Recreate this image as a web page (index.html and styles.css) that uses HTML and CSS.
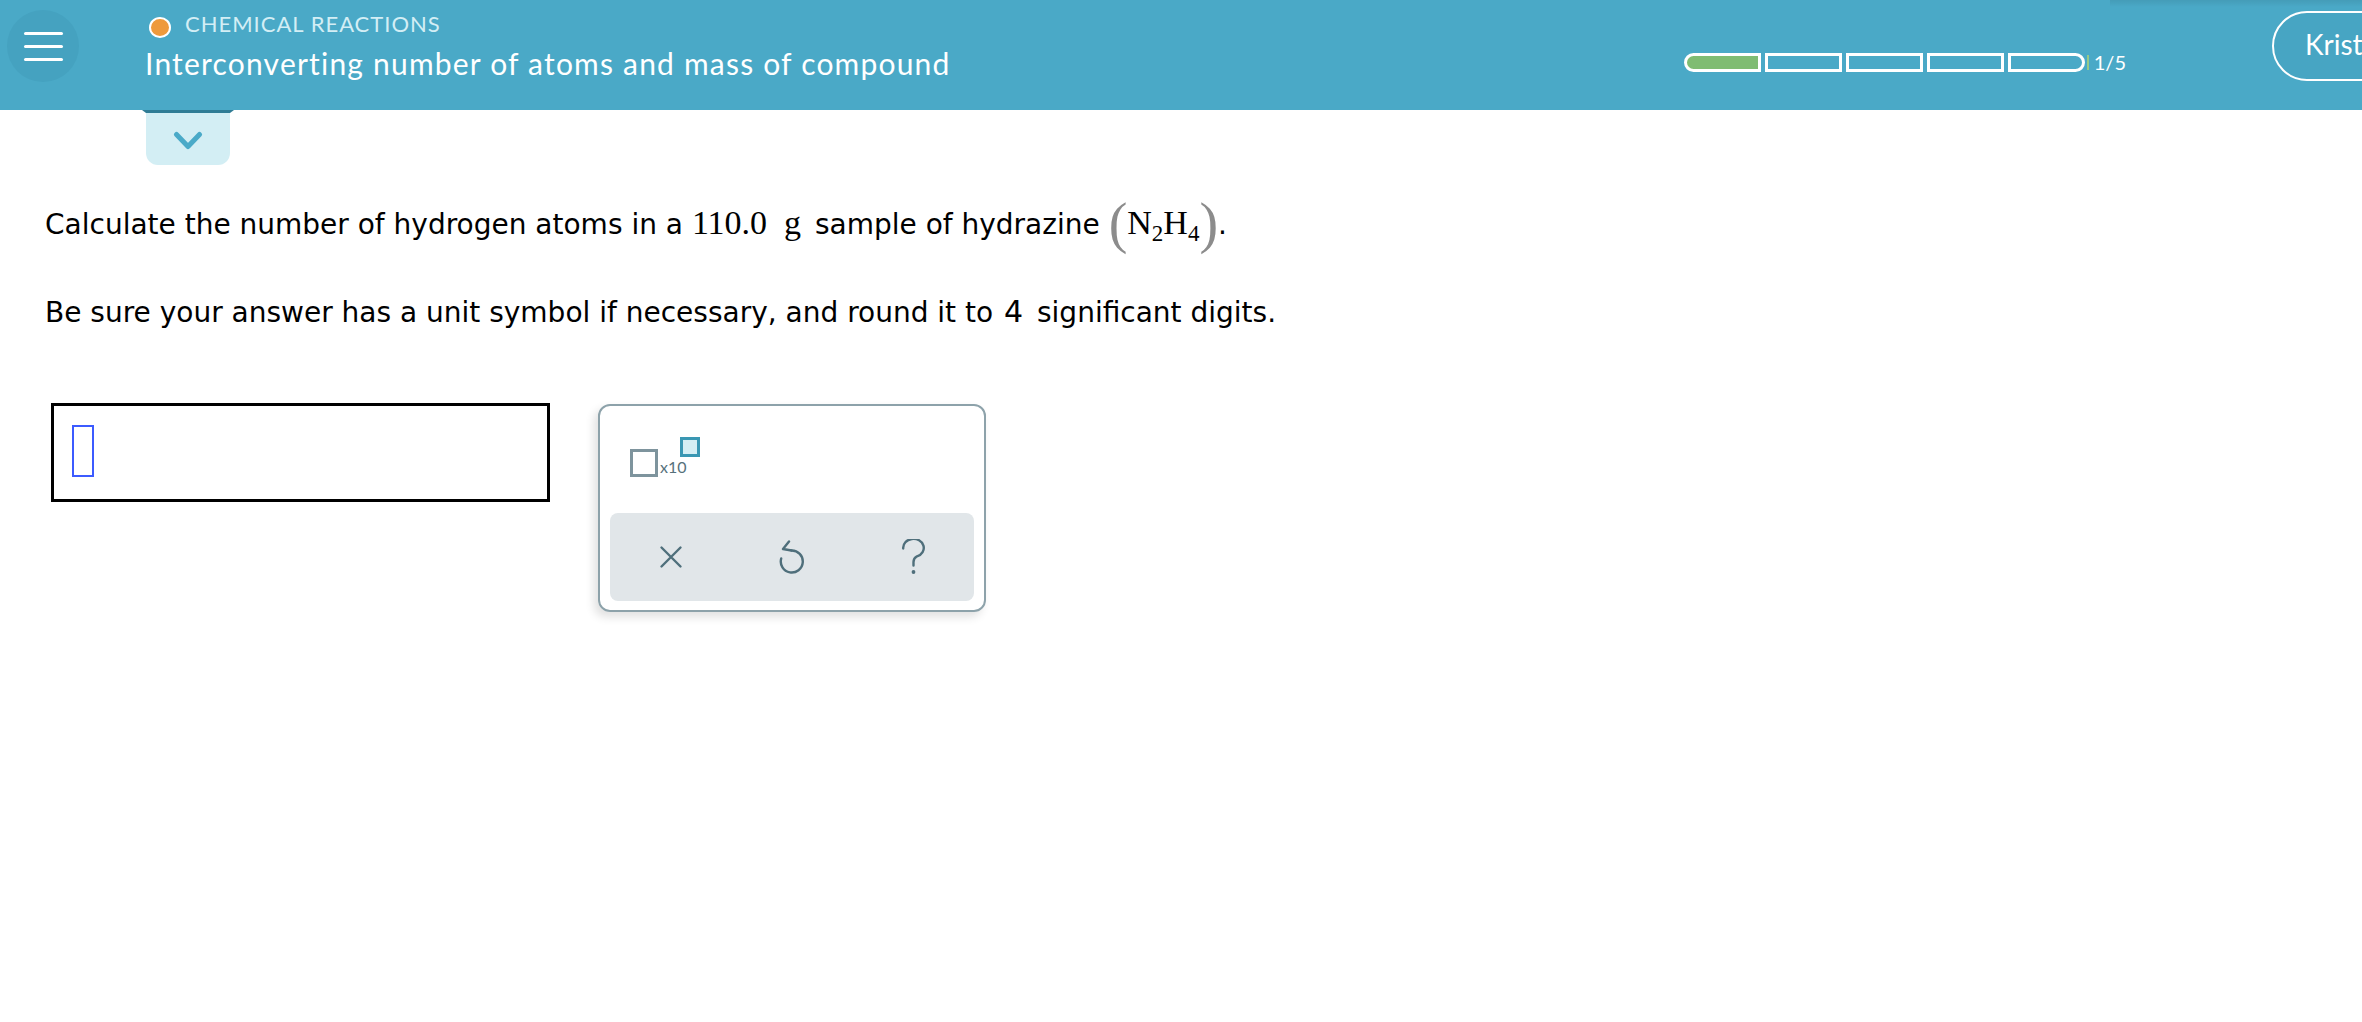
FILE: index.html
```html
<!DOCTYPE html>
<html lang="en">
<head>
<meta charset="utf-8">
<title>Interconverting number of atoms and mass of compound</title>
<link rel="stylesheet" href="styles.css">
</head>
<body>
<header class="topbar">
  <div class="menu"><span></span><span></span><span></span></div>
  <div class="titles">
    <div class="topic"><span class="dot"></span>CHEMICAL REACTIONS</div>
    <div class="title">Interconverting number of atoms and mass of compound</div>
  </div>
  <div class="progress">
    <div class="bar">
      <span class="seg first done"></span>
      <span class="seg"></span>
      <span class="seg"></span>
      <span class="seg"></span>
      <span class="seg last"></span>
    </div>
    <span class="tick"></span>
    <span class="count">1/5</span>
  </div>
  <div class="user">Kristen</div>
</header>

<div class="tab-wrap">
  <div class="tab-edge"></div>
  <div class="tab">
    <svg width="30" height="19" viewBox="0 0 30 19"><path d="M3.5 3.5 L15 15.5 L26.5 3.5" fill="none" stroke="#4aaac8" stroke-width="5" stroke-linecap="round" stroke-linejoin="round"/></svg>
  </div>
</div>

<main class="content">
  <p class="q">Calculate the number of hydrogen atoms in a <span class="m">110.0</span> <span class="m unit">g</span> sample of hydrazine <span class="paren">(</span><span class="m">N<sub>2</sub>H<sub>4</sub></span><span class="paren">)</span>.</p>
  <p class="q q2">Be sure your answer has a unit symbol if necessary, and round it to <span class="d4">4</span> significant digits.</p>

  <div class="answer-row">
    <div class="answer"><span class="cursor"></span></div>
    <div class="keypad">
      <div class="keys">
        <div class="x10">
          <span class="base"></span>
          <span class="ten">x10</span>
          <span class="exp"></span>
        </div>
      </div>
      <div class="actions">
        <svg width="24" height="24" viewBox="0 0 24 24"><path d="M2.5 2.5 L21.5 21.5 M21.5 2.5 L2.5 21.5" fill="none" stroke="#4f6f7b" stroke-width="2.4" stroke-linecap="round"/></svg>
        <svg width="26" height="34" viewBox="0 0 26 34"><path d="M10 1.5 L4 9 L12.5 10.5" fill="none" stroke="#4f6f7b" stroke-width="2.4" stroke-linecap="round" stroke-linejoin="round"/><path d="M12.5 10.5 A11 11 0 1 1 2.2 18.5" fill="none" stroke="#4f6f7b" stroke-width="2.4" stroke-linecap="round"/></svg>
        <svg width="25" height="36" viewBox="0 0 25 36"><path d="M2.2 9.5 A10.3 9 0 1 1 16 17.3 Q12.5 19.2 12.5 23 L12.5 26.5" fill="none" stroke="#4f6f7b" stroke-width="2.4" stroke-linecap="round"/><circle cx="12.5" cy="33" r="1.9" fill="#4f6f7b"/></svg>
      </div>
    </div>
  </div>
</main>
</body>
</html>
```
FILE: styles.css
```css
* { box-sizing: border-box; }
html, body { margin: 0; padding: 0; }
body {
  width: 2362px;
  height: 1022px;
  overflow: hidden;
  background: #fff;
  color: #000;
  font-family: "DejaVu Sans", Verdana, sans-serif;
}

/* ---------- header ---------- */
.topbar {
  position: relative;
  display: flex;
  align-items: flex-start;
  height: 110px;
  background: #4aa9c7;
  overflow: hidden;
  color: #fff;
  font-family: Lato, "Open Sans", sans-serif;
}
.topbar::after {
  content: "";
  position: absolute;
  top: 0;
  left: 2110px;
  right: 0;
  height: 7px;
  background: linear-gradient(rgba(0, 0, 0, 0.08), rgba(0, 0, 0, 0));
}
.menu {
  flex-shrink: 0;
  width: 72px;
  height: 72px;
  margin: 10px 0 0 7px;
  border-radius: 50%;
  background: #45a2c0;
  display: flex;
  flex-direction: column;
  align-items: center;
  justify-content: center;
  gap: 10px;
}
.menu span {
  display: block;
  width: 39px;
  height: 3px;
  border-radius: 2px;
  background: #fff;
}
.titles {
  flex: 1;
  min-width: 0;
  margin-left: 66px;
  padding-top: 13px;
}
.topic {
  display: flex;
  align-items: flex-start;
  font-size: 22px;
  line-height: 22px;
  letter-spacing: 1px;
  color: #d3eef5;
}
.dot {
  width: 22px;
  height: 21px;
  margin: 4px 14px 0 4px;
  border-radius: 50%;
  border: 2px solid #fff;
  background: #ee9a3c;
}
.title {
  margin-top: 10px;
  font-size: 30px;
  line-height: 30px;
  letter-spacing: 1.2px;
  white-space: nowrap;
}
.progress {
  flex-shrink: 0;
  display: flex;
  align-items: center;
  margin-top: 53px;
  margin-right: 146px;
}
.bar { display: flex; gap: 4px; }
.seg {
  width: 77px;
  height: 19px;
  border: 3px solid #fff;
}
.seg.first { border-radius: 10px 0 0 10px; }
.seg.last { border-radius: 0 10px 10px 0; }
.seg.done { background: #7fbc72; }
.tick {
  width: 2px;
  height: 15px;
  margin-left: 2px;
  background: #b7d76c;
  opacity: 0.7;
}
.count {
  margin-left: 5px;
  font-size: 20px;
  line-height: 19px;
}
.user {
  flex-shrink: 0;
  display: flex;
  align-items: center;
  width: 170px;
  height: 70px;
  margin-top: 11px;
  margin-right: -80px;
  padding: 0 0 4px 31px;
  border: 2px solid #fff;
  border-radius: 35px;
  background: #47a5c3;
  font-size: 28px;
  white-space: nowrap;
}

/* ---------- tab ---------- */
.tab-wrap {
  width: 92px;
  margin-left: 142px;
}
.tab-edge {
  height: 3px;
  background: #2f7c95;
  clip-path: polygon(0 0, 100% 0, calc(100% - 4px) 100%, 4px 100%);
}
.tab {
  height: 52px;
  margin: 0 4px;
  padding-top: 18px;
  display: flex;
  justify-content: center;
  align-items: flex-start;
  background: #d3eef4;
  border-radius: 0 0 12px 12px;
}

/* ---------- question ---------- */
.content { padding-left: 45px; }
.q {
  margin: 28px 0 0;
  font-size: 28px;
  line-height: 64px;
  white-space: nowrap;
}
.q2 { margin-top: 23px; }
.m {
  font-family: "Liberation Serif", "Times New Roman", serif;
  font-size: 34px;
  line-height: 1;
}
.unit { margin: 0 5px 0 8px; }
.m sub {
  font-size: 23px;
  line-height: 0;
  vertical-align: -7px;
}
.paren {
  font-family: "Liberation Serif", "Times New Roman", serif;
  font-size: 56px;
  line-height: 1;
  color: #8c8c8c;
  vertical-align: -8px;
}
.d4 { font-size: 30px; margin: 0 5px 0 2px; }

/* ---------- answer area ---------- */
.answer-row {
  display: flex;
  align-items: flex-start;
  gap: 48px;
  margin-top: 58px;
  padding-left: 6px;
}
.answer {
  width: 499px;
  height: 99px;
  padding: 19px 0 0 18px;
  border: 3px solid #000;
}
.cursor {
  display: block;
  width: 22px;
  height: 52px;
  border: 2px solid #3c5bff;
}
.keypad {
  display: flex;
  flex-direction: column;
  width: 388px;
  height: 208px;
  margin-top: 1px;
  border: 2px solid #8da2aa;
  border-radius: 12px;
  box-shadow: -4px 5px 10px rgba(0, 0, 0, 0.12);
}
.keys {
  height: 107px;
  padding: 31px 0 0 30px;
}
.x10 { display: flex; align-items: flex-start; }
.x10 .base {
  width: 28px;
  height: 28px;
  margin-top: 12px;
  border: 3px solid #7e949d;
}
.x10 .ten {
  margin: 22px 0 0 2px;
  font-family: Lato, "Open Sans", sans-serif;
  font-size: 16px;
  line-height: 16px;
  color: #56717b;
}
.x10 .exp {
  width: 20px;
  height: 20px;
  margin-left: -7px;
  border: 3px solid #3a97b3;
  background: #d4eef4;
}
.actions {
  display: grid;
  grid-template-columns: repeat(3, 1fr);
  align-items: center;
  justify-items: center;
  height: 88px;
  margin: 0 10px;
  border-radius: 8px;
  background: #e1e6e9;
}
.actions svg { display: block; }
```
